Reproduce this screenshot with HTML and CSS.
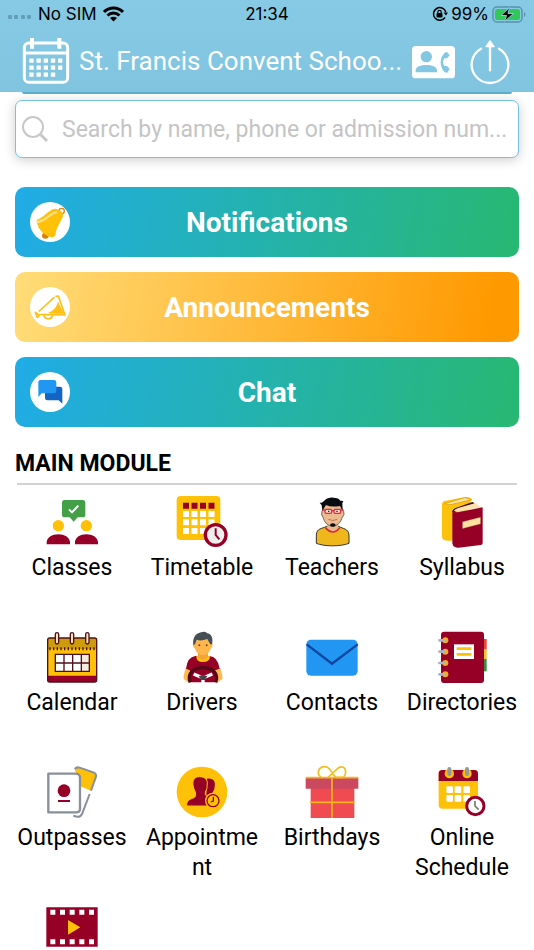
FILE: index.html
```html
<!DOCTYPE html>
<html lang="en">

<head>
    <meta charset="UTF-8">
    <meta name="viewport" content="width=device-width, initial-scale=1.0">
    <title>School Dashboard</title>
    <link rel="stylesheet" href="styles.css">
</head>

<body>
    <header class="header">
        <div class="status-bar">
            <div class="status-left">
                <svg width="24" height="16" viewBox="0 0 24 16" fill="#649fb8">
                    <rect x="0" y="9" width="4" height="4" rx="1" />
                    <rect x="6" y="9" width="4" height="4" rx="1" />
                    <rect x="13" y="9" width="4" height="4" rx="1" />
                    <rect x="19" y="9" width="4" height="4" rx="1" />
                </svg>
                <span>No SIM</span>
                <svg width="21" height="16" viewBox="0 0 21 16" fill="none" stroke="#000" stroke-width="3">
                    <path d="M1 6c5-5.500 14-5.500 19 0M4.500 9.500c3.500-3.500 8.500-3.500 12 0" />
                    <path d="M10.500 15.500l-3.500-3.500c2-1.800 5-1.800 7 0z" fill="#000" stroke="none" />
                </svg>
            </div>
            <span class="status-time">21:34</span>
            <div class="status-right">
                <svg width="16" height="16" viewBox="0 0 16 16" fill="none" stroke="#000" stroke-width="1.500">
                    <path d="M13 11.500A6.300 6.300 0 1 1 13.800 6" />
                    <path d="M11.500 6.500h4.500l-2 3z" fill="#000" stroke="none" />
                    <rect x="4.500" y="7" width="6" height="4.500" rx="1" fill="#000" stroke="none" />
                    <path d="M5.800 7.500V6a1.700 1.700 0 0 1 3.400 0v1.500" stroke-width="1.200" />
                </svg>
                <span>99%</span>
                <svg width="34" height="17" viewBox="0 0 34 17">
                    <rect x="1" y="1" width="29" height="15" rx="4" fill="none" stroke="#5793a9" stroke-width="1.500" />
                    <rect x="3" y="3" width="25" height="11" rx="2.500" fill="#33c759" />
                    <path d="M32 6c2 1 2 4 0 5z" fill="#5793a9" />
                    <path d="M17.500 1.500L9 9.500h5.500l-2 6L21.500 7.500H16z" fill="#000" stroke="#85c8e3" />
                </svg>
            </div>
        </div>
        <div class="title-bar">
            <button class="icon-button" type="button" aria-label="Calendar">
                <svg width="46" height="46" viewBox="0 0 138 138">
                    <rect x="4" y="15" width="130" height="118" rx="14" fill="none" stroke="#fff" stroke-width="9" />
                    <path d="M4 45h130" stroke="#fff" stroke-width="9" />
                    <path d="M27 0v32M109 0v32" stroke="#fff" stroke-width="12" />
                    <path d="M19 68h100M19 89h100M19 110h80" stroke="#fff" stroke-width="13" stroke-dasharray="13 8.500" />
                </svg>
            </button>
            <h1 class="school-name">St. Francis Convent Schoo...</h1>
            <button class="icon-button" type="button" aria-label="Contact phone">
                <svg width="43" height="46" viewBox="0 0 129 138">
                    <rect x="0" y="24" width="129" height="97" rx="11" fill="#fff" />
                    <circle cx="43" cy="56" r="17" fill="#83c7e2" />
                    <path d="M11 103V97C11 86 27 81 43 81s32 5 32 16v6z" fill="#83c7e2" />
                    <path d="M105 42L98 44C82 60 82 86 98 102l7 3 8-12-8-9h-8c-5-8-5-15 0-23h8l8-9z" fill="#83c7e2" />
                </svg>
            </button>
            <button class="icon-button" type="button" aria-label="Logout">
                <svg width="40" height="46" viewBox="0 0 120 138" fill="none" stroke="#fff" stroke-width="7" stroke-linecap="round">
                    <path d="M33 32A55 55 0 1 0 87 32" />
                    <path d="M60 20v77" />
                    <path d="M60 9L48 26h24z" fill="#fff" stroke-width="4" stroke-linejoin="round" />
                </svg>
            </button>
        </div>
    </header>

    <main class="content">
        <div class="banner-edge"></div>

        <label class="search-box">
            <svg width="26" height="26" viewBox="0 0 26 26" fill="none" stroke="#c8c8c8" stroke-width="2">
                <circle cx="11" cy="11" r="10" />
                <path d="M18 18l7 7" stroke-width="3" />
            </svg>
            <input type="text" aria-label="Search" placeholder="Search by name, phone or admission num...">
        </label>

        <div class="banners">
            <button class="banner" type="button">
                <span class="banner-icon">
                    <svg width="40" height="40" viewBox="0 0 120 120">
                        <ellipse cx="46" cy="101" rx="10" ry="9" fill="#d9820a" />
                        <circle cx="95" cy="27" r="8" fill="none" stroke="#dd8416" stroke-width="4" />
                        <path d="M20 53C43 46 55 22 76 20C92 24 101 31 99 43C89 66 79 76 76 100Q72 108 61 105C39 98 20 77 20 53z" fill="#ffc107" />
                        <path d="M23 60C49 58 58 33 78 31" fill="none" stroke="#ffe082" stroke-width="7" stroke-linecap="round" />
                    </svg>
                </span>
                Notifications
            </button>
            <button class="banner banner-orange" type="button">
                <span class="banner-icon">
                    <svg width="40" height="40" viewBox="0 0 120 120" fill="none" stroke="#fcc014" stroke-width="5" stroke-linecap="round" stroke-linejoin="round">
                        <path d="M28 72L72 32M78 28l7-1 20 57-81-2-8-6 6 15 7-7" />
                        <path d="M84 47L102 81 56 78C69 72 80 63 84 47z" fill="#fcc014" stroke-width="2" />
                        <path d="M42 86c2 12 23 12 25 1" />
                    </svg>
                </span>
                Announcements
            </button>
            <button class="banner" type="button">
                <span class="banner-icon">
                    <svg width="40" height="40" viewBox="0 0 120 120">
                        <path d="M50 44h40q7 0 7 7v44L86 85H52q-7 0-7-7V51z" fill="#1464c4" />
                        <path d="M31 24h41q7 0 7 7v26q0 7-7 7H35L25 75V31q0-7 6-7z" fill="#2196f3" />
                    </svg>
                </span>
                Chat
            </button>
        </div>

        <h2 class="section-title">MAIN MODULE</h2>

        <nav class="modules">
            <a class="module" href="#">
                <svg viewBox="0 0 156 156">
                    <path d="M56 12h54q8 0 8 8v36q0 8-8 8H95L83 77 71 64H56q-8 0-8-8V20q0-8 8-8z" fill="#43a047" />
                    <path d="M69 40l9 9 19-20" fill="none" stroke="#fff" stroke-width="6" />
                    <circle cx="37" cy="89" r="17" fill="#ffc107" />
                    <circle cx="121" cy="89" r="17" fill="#ffc107" />
                    <path d="M2 145v-7c2-14 16-23 35-23s33 9 35 23v7zM87 145v-7c2-14 15-23 34-23s33 9 35 23v7z" fill="#970026" />
                </svg>
                Classes
            </a>
            <a class="module" href="#">
                <svg viewBox="0 0 156 156">
                    <rect x="2" y="0" width="131" height="132" rx="12" fill="#ffc107" />
                    <path d="M21 29h96" stroke="#970026" stroke-width="18" stroke-dasharray="18 7.500" />
                    <path d="M21 54h96M21 79h96M21 105h96" stroke="#fff" stroke-width="18" stroke-dasharray="18 7.500" />
                    <circle cx="119" cy="117" r="31" fill="#eee" stroke="#970026" stroke-width="10" />
                    <path d="M119 97v20l11 13" fill="none" stroke="#970026" stroke-width="6" />
                </svg>
                Timetable
            </a>
            <a class="module" href="#">
                <svg viewBox="0 0 156 156">
                    <path d="M62 91c-14 8-30 5-31 26v25c24 10 73 10 98 0v-25c-2-20-18-18-31-26z" fill="#efb71b" stroke="#333" stroke-width="3" />
                    <path d="M64 83v18q16 15 32 0V83z" fill="#eab68d" />
                    <path d="M58 95q23 26 43 0" fill="none" stroke="#d8283f" stroke-width="5" />
                    <path d="M48 46q-4 10 3 18 6 24 29 27 22-3 29-27 8-8 4-18L103 27H56z" fill="#eebb91" stroke="#333" stroke-width="2" />
                    <path d="M49 45l-2-17-6-8c6 1 9-2 14-6 9-9 19-10 27-9 11 0 18 3 21 9l9 1-3 7 1 23-8-15q-28 5-42-4z" fill="#080c10" />
                    <g fill="#f7dccb" stroke="#d53046" stroke-width="4">
                        <rect x="57" y="40" width="20" height="12" rx="4" />
                        <rect x="84" y="40" width="20" height="12" rx="4" />
                        <path d="M49 42h8m20 2h7m20-2h8" />
                    </g>
                    <path d="M66 46h4m21 0h4" stroke="#222" stroke-width="4" />
                    <path d="M67 70q13 7 27 0" fill="none" stroke="#b67857" stroke-width="3" />
                    <path d="M73 84q7-5 15 0v6q-7 4-15 0z" fill="#080c10" />
                </svg>
                Teachers
            </a>
            <a class="module" href="#">
                <svg viewBox="0 0 156 156">
                    <path d="M18 24Q19 15 30 14L83 4q20-4 24 7L48 134Q20 137 18 124z" fill="#fcc20b" />
                    <path d="M26 23L87 5l20 6-59 14q-12 2-22-2z" fill="#ffe5a8" stroke="#d89708" stroke-width="2" />
                    <path d="M49 48q0-9 12-13l48-17 8 4-60 26z" fill="#430914" />
                    <path d="M54 44q8-8 20-10l45-13 17 13-69 13q-8 1-13-3z" fill="#ffe2ae" />
                    <path d="M49 44q7 6 20 4l71-14v108q0 4-5 5l-68 8q-16 1-18-13z" fill="#970026" />
                    <path d="M79 77l55-14v21L79 98z" fill="#ffe29f" stroke="#7b0820" stroke-width="1" />
                </svg>
                Syllabus
            </a>
            <a class="module" href="#">
                <svg viewBox="0 0 156 156">
                    <rect x="5" y="21" width="147" height="132" rx="6" fill="#ffc107" />
                    <path d="M5 54V26q0-5 5-5h137q5 0 5 5v28z" fill="#ce9b0a" />
                    <path d="M5 134h147v14q0 5-5 5H10q-5 0-5-5z" fill="#970026" />
                    <rect x="5" y="21" width="147" height="132" rx="6" fill="none" stroke="#4f101c" stroke-width="4" />
                    <path d="M10 53h140" stroke="#4f101c" stroke-width="9" stroke-dasharray="4 7" />
                    <path d="M28 70h102v51H28z" fill="#fff" />
                    <path d="M106 70h24v51h-24z" fill="#f5eadf" />
                    <path d="M28 70h102v51H28zM28 96h102M54 70v51M80 70v51M106 70v51" fill="none" stroke="#4f101c" stroke-width="4" />
                    <g fill="#ffe4bd" stroke="#4f101c" stroke-width="4">
                        <rect x="28" y="5" width="10" height="34" rx="5" />
                        <rect x="73" y="5" width="10" height="34" rx="5" />
                        <rect x="119" y="5" width="10" height="34" rx="5" />
                    </g>
                </svg>
                Calendar
            </a>
            <a class="module" href="#">
                <svg viewBox="0 0 156 156">
                    <path d="M30 110q-9 24-7 34l16 11 20-40zm102 0q9 24 7 34l-16 11-20-40z" fill="#ffb750" />
                    <path d="M58 75q-24 3-28 38l12 5v26h75v-26l14-5q-5-36-31-38z" fill="#970026" />
                    <path d="M61 74q-1 19 20 19t21-19" fill="#ffc107" />
                    <path d="M66 60h30v18q-15 15-30 0z" fill="#f4a434" />
                    <path d="M53 36q-5 2 0 13l4 4q7 19 24 19t23-19q8-7 5-16L94 26H62z" fill="#ffb74d" />
                    <path d="M52 42C49 17 61 5 79 3q12-2 14 4c15 1 19 18 15 33h-5l-9-15q-21 6-32 1l-5 14z" fill="#455056" />
                    <circle cx="70" cy="43" r="3" fill="#714727" />
                    <circle cx="92" cy="43" r="3" fill="#714727" />
                    <path d="M43 154C32 129 51 110 81 110s48 19 38 44" fill="#970026" stroke="#500915" stroke-width="10" />
                    <path d="M53 129l28 12 28-12M81 142v14" stroke="#fff" stroke-width="10" fill="none" />
                    <path d="M68 136q13-6 26 0l-8 11H76z" fill="#484448" />
                </svg>
                Drivers
            </a>
            <a class="module" href="#">
                <svg viewBox="0 0 156 156">
                    <rect x="1" y="26" width="154" height="108" rx="14" fill="#2196f3" />
                    <path d="M2 40l76 58 77-58" fill="none" stroke="#0d47a1" stroke-width="7" />
                </svg>
                Contacts
            </a>
            <a class="module" href="#">
                <svg viewBox="0 0 156 156">
                    <path d="M140 24h12v30h-12z" fill="#f44336" />
                    <path d="M140 54h12v30h-12z" fill="#fbc02d" />
                    <path d="M140 84h12v37h-12z" fill="#388e3c" />
                    <rect x="15" y="2" width="129" height="154" rx="9" fill="#970026" />
                    <path d="M54 40h60v44H54z" fill="#fff" />
                    <path d="M62 53h44M62 70h44" stroke="#ffc107" stroke-width="8" />
                    <g fill="#f3ae1e">
                        <circle cx="28" cy="28" r="9" />
                        <circle cx="28" cy="62" r="9" />
                        <circle cx="28" cy="96" r="9" />
                        <circle cx="28" cy="130" r="9" />
                    </g>
                    <path d="M10 28h16M10 62h16M10 96h16M10 130h16" stroke="#a9b7be" stroke-width="8" stroke-linecap="round" />
                </svg>
                Directories
            </a>
            <a class="module" href="#">
                <svg viewBox="0 0 156 156">
                    <path d="M86 8q6-6 15-3l43 15q8 4 6 12l-15 42-32-13z" fill="#ffc107" />
                    <path d="M86 9q6-7 15-4l43 15q8 4 6 12l-15 42M131 84l-23 60q-5 10-15 8l-11-3" fill="none" stroke="#88909a" stroke-width="6" />
                    <path d="M7 23h82q13 0 13 13v92q0 11-12 11H7z" fill="#fff" stroke="#88909a" stroke-width="7" stroke-linejoin="round" />
                    <circle cx="54" cy="74" r="19" fill="#970026" />
                    <path d="M36 105h36" stroke="#970026" stroke-width="6" />
                </svg>
                Outpasses
            </a>
            <a class="module" href="#">
                <svg viewBox="0 0 156 156">
                    <circle cx="78" cy="78" r="76" fill="#ffc107" />
                    <path d="M93 38c20-3 26 9 23 24-1 9-4 15-8 20v12l15 9v16H90z" fill="#970026" />
                    <path d="M70 32c19 0 27 11 23 28 2 8-3 11-5 18v8c3 7 19 8 19 18v16H32c-1-20 12-20 22-25 4-3 5-5 5-14-3-6-5-12-7-18-5-22 5-31 18-31z" fill="#970026" stroke="#ffc107" stroke-width="3" />
                    <circle cx="111" cy="104" r="24" fill="#ffc107" />
                    <circle cx="111" cy="104" r="18" fill="#ffc107" stroke="#970026" stroke-width="4" />
                    <path d="M112 92v13l-8 3" fill="none" stroke="#970026" stroke-width="4" />
                </svg>
                Appointment
            </a>
            <a class="module" href="#">
                <svg viewBox="0 0 156 156">
                    <path d="M14 65h131v91H14z" fill="#ef4b50" />
                    <path d="M-1 36h158v32H-1z" fill="#ca4860" />
                    <path d="M-1 35h158M78 35v121M12 109h134" stroke="#f4b51f" stroke-width="5" />
                    <path d="M46 34C30 24 37 2 56 2q9 0 15 8l7 9M66 34L97 6c9-7 22-2 22 11q0 11-7 17H90L78 22" fill="none" stroke="#f4bd18" stroke-width="5" />
                </svg>
                Birthdays
            </a>
            <a class="module" href="#">
                <svg viewBox="0 0 156 156">
                    <rect x="8" y="12" width="118" height="116" rx="11" fill="#ffc107" />
                    <path d="M8 45V23q0-11 11-11h96q11 0 11 11v22z" fill="#970026" />
                    <g fill="#ffc107">
                        <circle cx="40" cy="23" r="14" />
                        <circle cx="93" cy="23" r="14" />
                    </g>
                    <path d="M40 9v15M93 9v15" stroke="#92989b" stroke-width="12" stroke-linecap="round" />
                    <g fill="#fff">
                        <rect x="31" y="61" width="20" height="20" rx="3" />
                        <rect x="56" y="61" width="20" height="20" rx="3" />
                        <rect x="82" y="61" width="20" height="20" rx="3" />
                        <rect x="31" y="87" width="20" height="20" rx="3" />
                        <rect x="56" y="87" width="20" height="20" rx="3" />
                        <rect x="82" y="87" width="20" height="20" rx="3" />
                    </g>
                    <circle cx="118" cy="120" r="26" fill="#fff" stroke="#970026" stroke-width="9" />
                    <path d="M117 105v15l11 11" fill="none" stroke="#777" stroke-width="5" />
                </svg>
                Online Schedule
            </a>
            <a class="module" href="#" aria-label="Videos">
                <svg viewBox="0 0 156 156">
                    <path d="M1 19h154v118H1z" fill="#970026" />
                    <path d="M13 34h132M13 122h132" stroke="#fff" stroke-width="15" stroke-dasharray="15 14" />
                    <path d="M66 57l37 22-37 22z" fill="#ffc107" />
                </svg>
            </a>
        </nav>
    </main>
</body>

</html>
```

FILE: styles.css
```css
* {
    box-sizing: border-box;
}

body {
    margin: 0;
    height: 100vh;
    display: flex;
    flex-direction: column;
    font-family: Roboto, "Liberation Sans", sans-serif;
    background-color: #fff;
    color: #000;
}

button {
    border: none;
    padding: 0;
    background: none;
    font-family: inherit;
    cursor: pointer;
}

svg {
    display: block;
    flex-shrink: 0;
    overflow: visible;
}

/* header */
.header {
    flex-shrink: 0;
    background: linear-gradient(#86cae5, #80c4df);
}

.status-bar {
    display: grid;
    grid-template-columns: 1fr auto 1fr;
    align-items: center;
    height: 28px;
    padding: 0 8px;
    font-family: Inter, sans-serif;
    font-size: 17px;
}

.status-left,
.status-right {
    display: flex;
    align-items: center;
    gap: 6px;
}

.status-right {
    justify-content: flex-end;
    gap: 3px;
}

.title-bar {
    display: flex;
    align-items: center;
    height: 64px;
    padding: 2px 24px 0 23px;
    gap: 15px;
}

.school-name {
    flex: 1;
    min-width: 0;
    margin: 0;
    margin-left: -5px;
    font-size: 26px;
    font-weight: 400;
    line-height: 36px;
    color: #fff;
    white-space: nowrap;
}

/* content */
.content {
    flex: 1;
    min-height: 0;
    overflow-x: hidden;
    overflow-y: auto;
    scrollbar-width: none;
}

.banner-edge {
    height: 2px;
    margin: 0 22px;
    background-color: #5cafce;
    border-radius: 0 0 8px 8px;
}

.search-box {
    display: flex;
    align-items: center;
    gap: 14px;
    height: 58px;
    margin: 6px 15px 0;
    padding: 0 8px 0 6px;
    border: 1px solid #74c3e2;
    border-radius: 7px;
    background-color: #fff;
    box-shadow: 0 2px 12px rgba(0, 0, 0, 0.2);
}

.search-box input {
    flex: 1;
    min-width: 0;
    border: none;
    outline: none;
    padding: 0;
    background: none;
    font-family: inherit;
    font-size: 23px;
}

.search-box input::placeholder {
    color: #c4c4c4;
    opacity: 1;
}

.banners {
    display: grid;
    gap: 15px;
    margin: 29px 15px 0;
}

.banner {
    display: grid;
    grid-template-columns: 40px 1fr 40px;
    align-items: center;
    height: 70px;
    padding: 0 15px;
    border-radius: 10px;
    background: linear-gradient(100deg, #20ace6, #28b872);
    color: #fff;
    font-size: 28px;
    font-weight: 700;
}

.banner-orange {
    background: linear-gradient(100deg, #ffdd79, #ff9900 94%);
}

.banner-icon {
    border-radius: 50%;
    background-color: #fff;
}

.section-title {
    margin: 23px 15px 0;
    font-size: 23px;
    font-weight: 700;
    line-height: 28px;
}

/* modules */
.modules {
    display: grid;
    grid-template-columns: repeat(4, 1fr);
    margin: 0 7px;
    position: relative;
    padding-top: 18px;
}

.modules::before {
    content: "";
    position: absolute;
    top: 5px;
    left: 10px;
    right: 10px;
    height: 2px;
    background-color: #d2d2d2;
}

.module {
    display: flex;
    flex-direction: column;
    align-items: center;
    gap: 5px;
    min-height: 135px;
    padding: 0 8px 18px;
    font-size: 23px;
    line-height: 30px;
    text-align: center;
    text-decoration: none;
    overflow-wrap: anywhere;
    color: #000;
}

.module svg {
    width: 52px;
    height: 52px;
}
```
